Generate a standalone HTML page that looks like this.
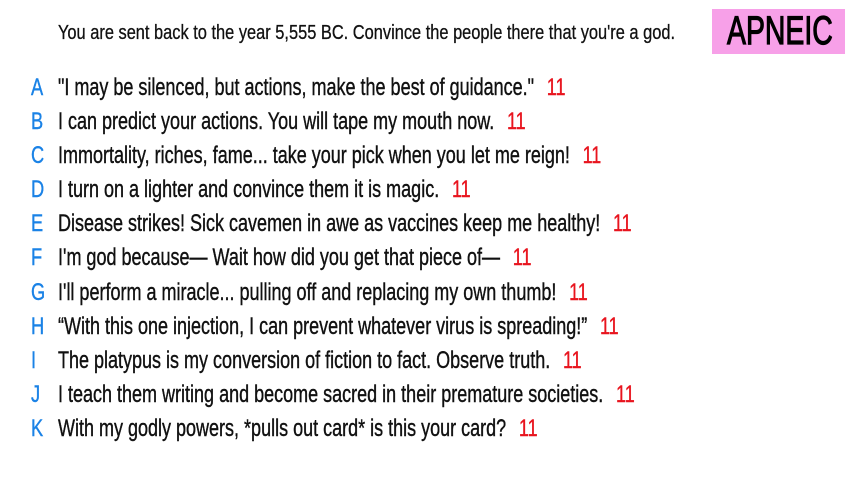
<!DOCTYPE html>
<html><head><meta charset="utf-8"><style>
body{margin:0;width:853px;height:480px;background:#fff;overflow:hidden;position:relative;font-family:"Liberation Sans",sans-serif;color:#111}
.h{position:absolute;left:58px;top:22px;font-size:20px;white-space:nowrap;transform:scaleX(0.82);transform-origin:left center;-webkit-text-stroke:0.3px #111}
.box{position:absolute;left:712px;top:9px;width:133px;height:45px;background:#f7a0e8}
.box div{position:absolute;left:15px;top:0;font-size:40px;line-height:45px;color:#000;transform:scaleX(0.71);transform-origin:left center;white-space:nowrap;-webkit-text-stroke:1.2px #000}
.r{position:absolute;left:0;font-size:24px;white-space:nowrap;height:30px;line-height:30px;-webkit-text-stroke:0.4px currentColor}
.r b{position:absolute;left:31px;font-weight:normal;color:#1a82e6;transform:scaleX(0.76);transform-origin:left center}
.r span{position:absolute;left:58px;transform:scaleX(0.75);transform-origin:left center}
.r i{font-style:normal;color:#e8141e;margin-left:17px}
</style></head><body>
<div class="h">You are sent back to the year 5,555 BC. Convince the people there that you're a god.</div>
<div class="box"><div>APNEIC</div></div>
<div class="r" style="top:73px"><b>A</b><span>"I may be silenced, but actions, make the best of guidance."<i>11</i></span></div>
<div class="r" style="top:107px"><b>B</b><span>I can predict your actions. You will tape my mouth now.<i>11</i></span></div>
<div class="r" style="top:141px"><b>C</b><span>Immortality, riches, fame... take your pick when you let me reign!<i>11</i></span></div>
<div class="r" style="top:175px"><b>D</b><span>I turn on a lighter and convince them it is magic.<i>11</i></span></div>
<div class="r" style="top:209px"><b>E</b><span>Disease strikes! Sick cavemen in awe as vaccines keep me healthy!<i>11</i></span></div>
<div class="r" style="top:243px"><b>F</b><span>I'm god because— Wait how did you get that piece of—<i>11</i></span></div>
<div class="r" style="top:278px"><b>G</b><span>I'll perform a miracle... pulling off and replacing my own thumb!<i>11</i></span></div>
<div class="r" style="top:312px"><b>H</b><span>“With this one injection, I can prevent whatever virus is spreading!”<i>11</i></span></div>
<div class="r" style="top:346px"><b>I</b><span>The platypus is my conversion of fiction to fact. Observe truth.<i>11</i></span></div>
<div class="r" style="top:380px"><b>J</b><span>I teach them writing and become sacred in their premature societies.<i>11</i></span></div>
<div class="r" style="top:414px"><b>K</b><span>With my godly powers, *pulls out card* is this your card?<i>11</i></span></div>
</body></html>
